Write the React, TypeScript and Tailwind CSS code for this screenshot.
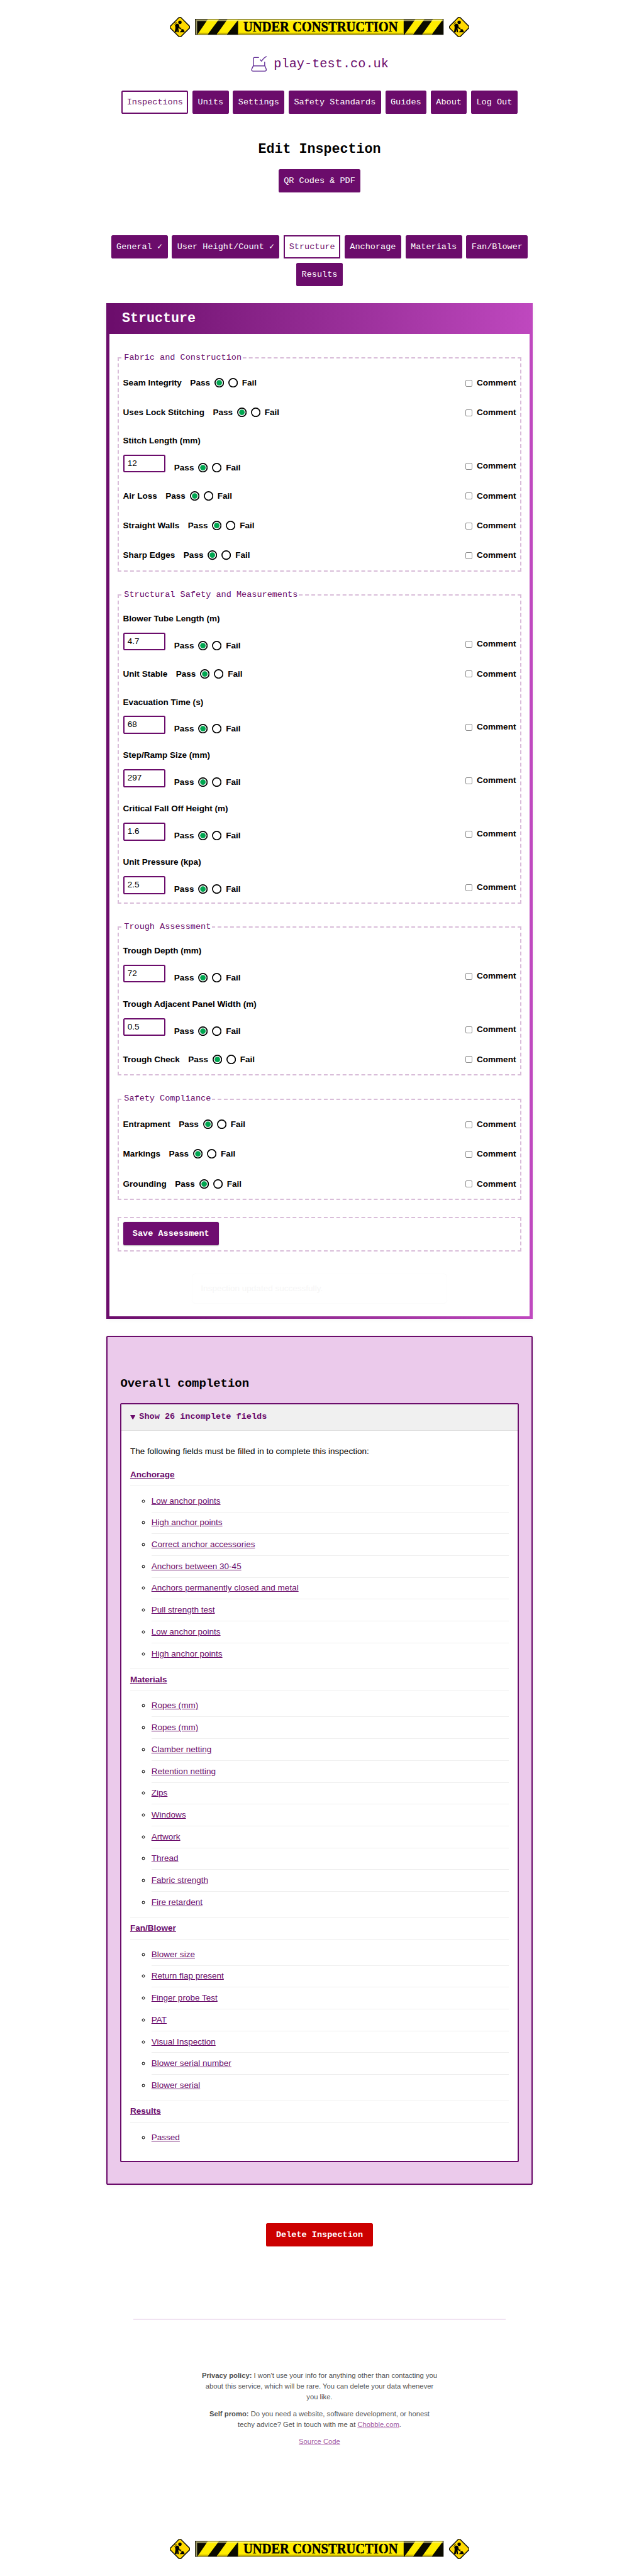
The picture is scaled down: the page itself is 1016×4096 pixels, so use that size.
import React from "react";

const MONO = "font-['Liberation_Mono','DejaVu_Sans_Mono',monospace]";

function WorkerSign() {
  return (
    <svg width="38" height="38" viewBox="0 0 38 38" className="block shrink-0">
      <path d="M17 0h4L38 17v4L21 38h-4L0 21v-4Z" fill="#000" />
      <path d="M18 1.2h2L36.6 18v2L20 36.6h-2L1.4 20v-2Z" fill="#ffd900" />
      <circle cx="19" cy="10" r="3.2" fill="#000" />
      <path d="M12.500 12.500l3.200.4 1.600 2 1 4.500 3.600 1.200-.6 1.400-4.300-1.200-.4-1.600-.6 2.200 1 7.400h-2.600l-.9-5.600-.9 5.600H9.300l1.200-8.400-.5-5Z" fill="#000" />
      <path d="M8.500 9.500l1.800 3M12.500 9.500l-2 3M8.500 14.500l2 1" stroke="#000" strokeWidth="1" />
      <path d="M15 19.500l9.500 5" stroke="#000" strokeWidth="1.2" />
      <path d="M18.500 28.600l2.800-3 2.400-2.800 1.800.6 1.800 3 .5 2.200Z" fill="#000" />
    </svg>
  );
}

function Banner() {
  return (
    <svg width="467" height="30" viewBox="0 0 467 30" className="block shrink-0">
      <rect width="467" height="30" fill="#0a0a00" />
      <rect x="81" y="1" width="311" height="28" fill="#ffec00" />
      <g fill="#ffec00">
        <path d="M24 1h21L24 29H5Z" />
        <path d="M61 1h20v1L60 29H41Z" />
        <path d="M414 1h17L410 29H394Z" />
        <path d="M447 1h18v1L445 29H427Z" />
      </g>
      <rect x="1" y="1" width="465" height="3" fill="#fff8a8" opacity="0.63" />
      <rect x="1" y="4" width="3" height="25" fill="#fff8a8" opacity="0.6" />
      <rect x="81" y="26" width="311" height="3" fill="#c8b400" />
      <path d="M7 26h19l-2 3H5ZM43 26h19l-2 3H41ZM396 26h16l-2 3H394ZM429 26h18l-2 3H427Z" fill="#c8b400" />
      <text
        x="91"
        y="24"
        textLength="290"
        lengthAdjust="spacingAndGlyphs"
        fontFamily="Liberation Serif"
        fontWeight="700"
        fontSize="27"
        fill="#000"
        stroke="#000"
        strokeWidth="0.5"
      >
        UNDER CONSTRUCTION
      </text>
      <path d="M192.500 5v20M210 5v20M310.500 5v20M354 5v20" stroke="#ffec00" strokeWidth="1.3" />
    </svg>
  );
}

function UnderConstruction() {
  return (
    <div className="flex items-center justify-center gap-[10px]">
      <WorkerSign />
      <Banner />
      <WorkerSign />
    </div>
  );
}

function LogoIcon() {
  return (
    <svg width="32" height="32" viewBox="0 0 32 32" fill="none" stroke="#663399" strokeWidth="1.7" strokeLinecap="round" strokeLinejoin="round" className="block">
      <path d="M15.500 4H8q-2.200 0-2.200 2.200V19.700H27V12.700" />
      <path d="M18.700 8.300L21 10.800Q24.500 5 30 2.300" />
      <path d="M5.500 19.900L2.600 26q-.5 3.700 2.600 3.700H27.300q3.100 0 2.600-3.700L27.400 19.900" />
    </svg>
  );
}

function NavButton({ label, active, square }: { label: string; active?: boolean; square?: boolean }) {
  return (
    <a
      className={
        `flex h-[44px] items-center justify-center border-[2.4px] border-[#6b0c6b] px-[7.6px] pt-px text-[16px] leading-[24px] whitespace-pre ${MONO} ` +
        (active ? "bg-white text-[#6b0c6b] " : "bg-[#6b0c6b] text-white ") +
        (square ? "" : "rounded-[3px]")
      }
    >
      {label}
    </a>
  );
}

function Radio({ checked }: { checked?: boolean }) {
  return (
    <svg width="18" height="18" viewBox="0 0 18 18" className="block shrink-0">
      <circle cx="9" cy="9" r="7.950" fill="#fff" stroke="#000" strokeWidth="2" />
      {checked && <circle cx="9" cy="9" r="5.200" fill="#00a650" />}
    </svg>
  );
}

function PassFail() {
  return (
    <div className="flex items-center gap-[8px]">
      <span className="pt-[1.2px]">Pass</span>
      <Radio checked />
      <Radio />
      <span className="pt-[1.2px]">Fail</span>
    </div>
  );
}

function CommentToggle() {
  return (
    <label className="ml-auto flex h-[32px] items-center gap-[8px]">
      <span className="mt-[1.5px] size-[13px] rounded-[2.5px] border-[1.2px] border-[#8a8a8a] bg-white" />
      <span className="pt-[1.2px]">Comment</span>
    </label>
  );
}

type Field = { label: string; value?: string };

function FieldRow({ label, value }: Field) {
  if (value === undefined) {
    return (
      <div className="flex h-[32px] items-center gap-[16px]">
        <span className="pt-[1.5px]">{label}</span>
        <PassFail />
        <CommentToggle />
      </div>
    );
  }
  return (
    <div className="flex h-[76.4px] flex-col pt-[1.8px]">
      <span className="h-[24px] shrink-0">{label}</span>
      <div className="mt-auto flex h-[37.4px] items-start">
        <div className="flex h-[34px] w-[80px] items-center rounded-[3px] border-[2.4px] border-[#6b0c6b] bg-white px-[6px] font-normal">
          {value}
        </div>
        <div className="mt-[12px] ml-[16px]">
          <PassFail />
        </div>
        <div className="mt-[5.4px] ml-auto">
          <CommentToggle />
        </div>
      </div>
    </div>
  );
}

const GROUPS: { title: string; fields: Field[] }[] = [
  {
    title: "Fabric and Construction",
    fields: [
      { label: "Seam Integrity" },
      { label: "Uses Lock Stitching" },
      { label: "Stitch Length (mm)", value: "12" },
      { label: "Air Loss" },
      { label: "Straight Walls" },
      { label: "Sharp Edges" },
    ],
  },
  {
    title: "Structural Safety and Measurements",
    fields: [
      { label: "Blower Tube Length (m)", value: "4.7" },
      { label: "Unit Stable" },
      { label: "Evacuation Time (s)", value: "68" },
      { label: "Step/Ramp Size (mm)", value: "297" },
      { label: "Critical Fall Off Height (m)", value: "1.6" },
      { label: "Unit Pressure (kpa)", value: "2.5" },
    ],
  },
  {
    title: "Trough Assessment",
    fields: [
      { label: "Trough Depth (mm)", value: "72" },
      { label: "Trough Adjacent Panel Width (m)", value: "0.5" },
      { label: "Trough Check" },
    ],
  },
  {
    title: "Safety Compliance",
    fields: [{ label: "Entrapment" }, { label: "Markings" }, { label: "Grounding" }],
  },
];

const INCOMPLETE: { title: string; items: string[] }[] = [
  {
    title: "Anchorage",
    items: [
      "Low anchor points",
      "High anchor points",
      "Correct anchor accessories",
      "Anchors between 30-45",
      "Anchors permanently closed and metal",
      "Pull strength test",
      "Low anchor points",
      "High anchor points",
    ],
  },
  {
    title: "Materials",
    items: [
      "Ropes (mm)",
      "Ropes (mm)",
      "Clamber netting",
      "Retention netting",
      "Zips",
      "Windows",
      "Artwork",
      "Thread",
      "Fabric strength",
      "Fire retardent",
    ],
  },
  {
    title: "Fan/Blower",
    items: [
      "Blower size",
      "Return flap present",
      "Finger probe Test",
      "PAT",
      "Visual Inspection",
      "Blower serial number",
      "Blower serial",
    ],
  },
  { title: "Results", items: ["Passed"] },
];

function AssessmentSection() {
  return (
    <section className="mt-[32px] flex h-[1908px] flex-col bg-linear-to-r from-[#6b0c6b] to-[#bf48bf] px-[5px] pb-[5px] shadow-[0_2px_8px_rgba(0,0,0,0.05)]">
      <h2 className={`flex h-[58px] shrink-0 items-center pl-[24px] text-[25.6px] font-bold text-white ${MONO}`}>
        Structure
      </h2>
      <div className="flex grow flex-col bg-white px-[16px] pt-[32px] text-[16px] leading-[24px] font-bold">
        {GROUPS.map((group) => (
          <fieldset key={group.title} className="mb-[32px] border-[2.4px] border-dashed border-[#d9bdd9] px-[7.6px] pt-[19px] pb-[12.6px]">
            <legend className={`px-[2px] font-normal text-[#6b0c6b] ${MONO}`}>{group.title}</legend>
            <div className="flex flex-col gap-[24px]">
              {group.fields.map((field) => (
                <FieldRow key={field.label} {...field} />
              ))}
            </div>
          </fieldset>
        ))}
        <div className="flex h-[64px] items-start border-[2.4px] border-dashed border-[#d9bdd9] px-[7.6px] pt-[6.6px]">
          <button className={`h-[44px] w-[180px] rounded-[3px] bg-[#6f0d70] pt-px font-bold text-white shadow-[0_1px_2px_rgba(0,0,0,0.25)] ${MONO}`}>
            Save Assessment
          </button>
        </div>
        <div className="mt-[42px] ml-[139px] flex h-[57px] w-[480px] items-center rounded-[6px] border border-[#fcfcfc] pl-[16px] font-normal text-[#f6f6f6]">
          Inspection updated successfully.
        </div>
      </div>
    </section>
  );
}

function CompletionSection() {
  return (
    <section className="mt-[32px] h-[1594px] rounded-[3px] border-[2.4px] border-[#6b0c6b] bg-[#ebcaeb] px-[23.6px] shadow-[0_2px_8px_rgba(0,0,0,0.05)]">
      <h3 className={`mt-[70px] text-[22.4px] leading-[34px] font-bold ${MONO}`}>Overall completion</h3>
      <div className="mt-[19.6px] h-[1426px] rounded-[3px] border-[2.4px] border-[#6b0c6b] bg-white">
        <div className={`flex h-[49px] items-center border-b-[1.2px] border-[#ddd] bg-[#f0f0f0] pl-[16px] text-[16px] font-bold text-[#6b0c6b] ${MONO}`}>
          <svg width="10" height="9" viewBox="0 0 10 9" className="mr-[7px] block">
            <path d="M0 0h10L5 9Z" fill="#6b0c6b" />
          </svg>
          Show 26 incomplete fields
        </div>
        <div className="px-[16px] pt-[27.6px] text-[16px] leading-[24px]">
          <p className="mb-[12px]">The following fields must be filled in to complete this inspection:</p>
          <ul>
            {INCOMPLETE.map((group) => (
              <li key={group.title} className="border-b-[1.2px] border-[#eee] pb-[7.8px] last:border-b-0">
                <div className="h-[41px] border-b-[1.2px] border-[#eee] pt-[8px]">
                  <a className="font-bold text-[#6b0c6b] underline">{group.title}</a>
                </div>
                <ul className="mt-[8px] list-[circle] pl-[40px]">
                  {group.items.map((item, i) => (
                    <li key={i} className="h-[41px] border-b-[1.2px] border-[#eee] pt-[8px] last:h-[40px] last:border-b-0">
                      <a className="text-[#6b0c6b] underline">{item}</a>
                    </li>
                  ))}
                </ul>
              </li>
            ))}
          </ul>
        </div>
      </div>
    </section>
  );
}

function Footer() {
  return (
    <footer className="mt-[136px] flex flex-col items-center">
      <div className="h-[1.2px] w-[700px] bg-[#d5aed8]" />
      <div className="mt-[95.5px] text-center text-[13.333px] leading-[20px] whitespace-nowrap opacity-70">
        <p>
          <b>Privacy policy:</b> I won't use your info for anything other than contacting you
          <br />
          about this service, which will be rare. You can delete your data whenever
          <br />
          you like.
        </p>
        <p className="mt-[12px]">
          <b>Self promo:</b> Do you need a website, software development, or honest
          <br />
          techy advice? Get in touch with me at <a className="text-[#7b0c7b] underline">Chobble.com</a>.
        </p>
        <p className="mt-[12px]">
          <a className="text-[#7b0c7b] underline">Source Code</a>
        </p>
      </div>
    </footer>
  );
}

export default function App() {
  return (
    <div className="flex justify-center overflow-hidden bg-white">
      <div className="flex h-[4839px] w-[1200px] shrink-0 flex-col items-center pt-[32px] font-['Liberation_Sans',sans-serif] text-[16px] text-black [zoom:0.84647]">
        <UnderConstruction />
        <div className="mt-[34px] flex h-[32px] items-center gap-[12px]">
          <LogoIcon />
          <span className={`text-[24px] leading-[32px] text-[#6b0c6b] ${MONO}`}>play-test.co.uk</span>
        </div>
        <nav className="mt-[34px] flex gap-[8px]">
          <NavButton label="Inspections" active />
          <NavButton label="Units" />
          <NavButton label="Settings" />
          <NavButton label="Safety Standards" />
          <NavButton label="Guides" />
          <NavButton label="About" />
          <NavButton label="Log Out" />
        </nav>
        <h1 className={`mt-[49px] mb-[19px] text-[25.6px] leading-[36px] font-bold ${MONO}`}>Edit Inspection</h1>
        <NavButton label="QR Codes & PDF" />
        <main className="mt-[80px] flex w-[800px] flex-col">
          <nav className="flex flex-wrap justify-center gap-[8px]">
            <NavButton label="General ✓" />
            <NavButton label="User Height/Count ✓" />
            <NavButton label="Structure" active square />
            <NavButton label="Anchorage" />
            <NavButton label="Materials" />
            <NavButton label="Fan/Blower" />
            <NavButton label="Results" />
          </nav>
          <AssessmentSection />
          <CompletionSection />
        </main>
        <button className={`mt-[72px] h-[44px] w-[200px] shrink-0 rounded-[3px] bg-[#c00] pt-px text-[16px] font-bold text-white ${MONO}`}>
          Delete Inspection
        </button>
        <Footer />
        <div className="mt-auto mb-[32px]">
          <UnderConstruction />
        </div>
      </div>
    </div>
  );
}
